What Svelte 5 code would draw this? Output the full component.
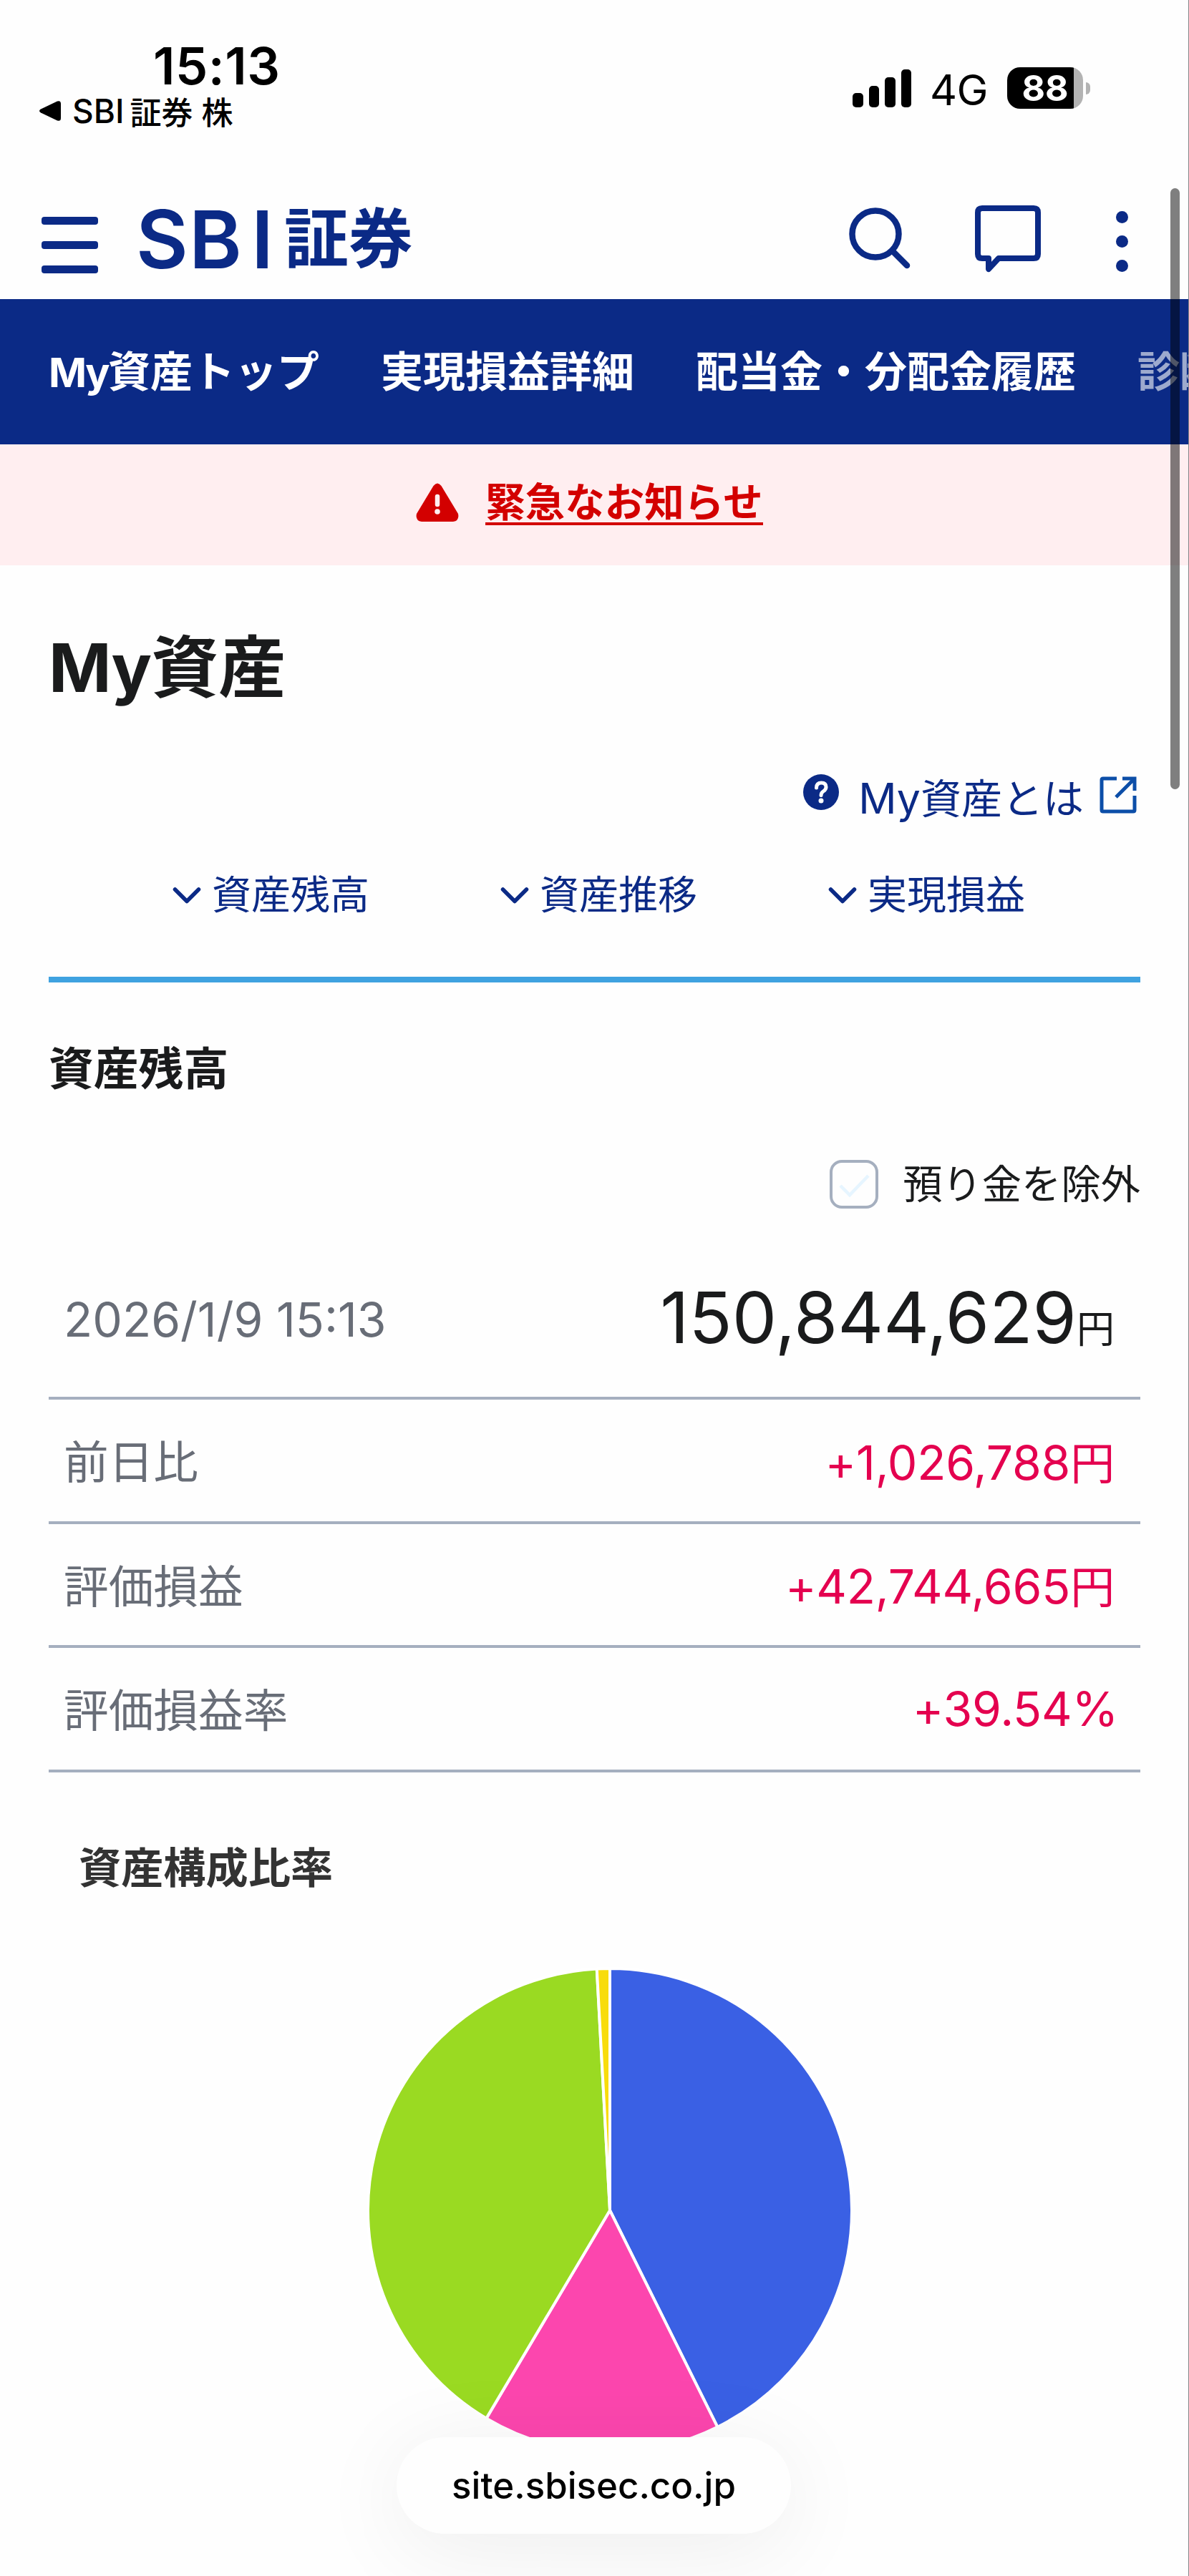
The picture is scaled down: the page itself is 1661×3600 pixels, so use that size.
<script>
    let exclude_deposit = $state(false);

    const signal = [20, 30, 42, 53];
    const menu = ["実現損益詳細", "配当金・分配金履歴"];
    const anchors = ["資産残高", "資産推移", "実現損益"];
    const rows = [
        { label: "前日比", value: "+1,026,788", unit: "円" },
        { label: "評価損益", value: "+42,744,665", unit: "円" },
        { label: "評価損益率", value: "+39.54%", unit: "" }
    ];

    // angles in degrees, clockwise from the top
    const slices = [
        { from: 0, to: 153.6, color: "#3a60e4" },
        { from: 153.6, to: 210.7, color: "#fc46ae" },
        { from: 210.7, to: 356.9, color: "#9ada22" },
        { from: 356.9, to: 360, color: "#f8dc0c" }
    ];
    const radius = 338;

    function point(angle) {
        const rad = (angle * Math.PI) / 180;
        return `${(340 + radius * Math.sin(rad)).toFixed(2)} ${(340 - radius * Math.cos(rad)).toFixed(2)}`;
    }
    function slice_path(s) {
        const large = s.to - s.from > 180 ? 1 : 0;
        return `M340 340 L${point(s.from)} A${radius} ${radius} 0 ${large} 1 ${point(s.to)} Z`;
    }
</script>

<div class="screen">
    <div class="status">
        <div class="status-left">
            <div class="clock">15:13</div>
            <div class="back">
                <svg width="32" height="30" viewBox="0 0 32 30"><path d="M3 12.5 L26 1.5 Q31 0 31 5 V25 Q31 30 26 28.500 L3 17.500 Q-1 15 3 12.500Z" fill="#000" /></svg>
                <span class="back-sbi">SBI</span><span class="back-jp">証券</span><span class="back-jp last">株</span>
            </div>
        </div>
        <div class="status-right">
            <div class="signal">
                {#each signal as height}
                    <i style="height: {height}px"></i>
                {/each}
            </div>
            <span class="network">4G</span>
            <div class="battery"><span>88</span></div>
            <i class="nub"></i>
        </div>
    </div>

    <header>
        <div class="burger"><i></i><i></i><i></i></div>
        <div class="logo"><span class="logo-s">S</span><span class="logo-b">B</span><span class="logo-i">I</span><span class="logo-jp">証券</span></div>
        <div class="tools">
            <svg width="88" height="100" viewBox="0 0 88 100" fill="none" stroke="#0b2a86" stroke-width="8.500" stroke-linecap="round">
                <circle cx="38" cy="45" r="32.500" />
                <path d="M62 69 L82 89" />
            </svg>
            <svg width="92" height="100" viewBox="0 0 92 100" fill="none" stroke="#0b2a86" stroke-width="8" stroke-linejoin="round">
                <path d="M10 9 H82 Q88 9 88 15 V73 Q88 79 82 79 H33 L19 94 V79 H10 Q4 79 4 73 V15 Q4 9 10 9Z" />
            </svg>
            <div class="dots"><i></i><i></i><i></i></div>
        </div>
    </header>

    <nav>
        <a href="#top"><span class="nav-my">My</span>資産トップ</a>
        {#each menu as item}
            <a href="#menu">{item}</a>
        {/each}
        <a href="#menu" class="faded">診断</a>
    </nav>

    <div class="notice">
        <svg width="60" height="54" viewBox="0 0 60 54">
            <path d="M24.500 4 Q30 -3 35.500 4 L59 43 Q61 53 52 54 H8 Q-1 53 1 43Z" fill="#d30000" />
            <path d="M30 19 V30" stroke="#ffeef0" stroke-width="6.500" stroke-linecap="round" />
            <circle cx="30" cy="40" r="3.800" fill="#ffeef0" />
        </svg>
        <a href="#notice">緊急なお知らせ</a>
    </div>

    <main>
        <h1><span>My</span>資産</h1>

        <div class="help">
            <svg class="question" width="50" height="50" viewBox="0 0 50 50">
                <circle cx="25" cy="25" r="25" fill="#0b2a86" />
                <path d="M18.500 19 Q18.500 12 25.500 12 Q32 12 32 18 Q32 21.500 28 24 Q25 26 25 29.500" fill="none" stroke="#fff" stroke-width="5" stroke-linecap="round" />
                <circle cx="25" cy="37" r="3.500" fill="#fff" />
            </svg>
            <a href="#help"><span>My</span>資産とは</a>
            <svg class="external" width="52" height="52" viewBox="0 0 52 52" fill="none" stroke="#0c4ea8" stroke-width="5">
                <path d="M24 3 H5 Q3 3 3 5 V47 Q3 49 5 49 H47 Q49 49 49 47 V27" />
                <path d="M32 3 H49 V20 M49 3 L23 29" />
            </svg>
        </div>

        <div class="anchors">
            {#each anchors as anchor}
                <a href="#section">
                    <svg width="40" height="26" viewBox="0 0 40 26"><path d="M3.500 4 L20 20.500 L36.500 4" fill="none" stroke="#0b2a86" stroke-width="5.500" stroke-linecap="round" stroke-linejoin="round" /></svg>
                    {anchor}
                </a>
            {/each}
        </div>

        <h2>資産残高</h2>

        <label class="exclude">
            <input type="checkbox" bind:checked={exclude_deposit} />
            <span class="box">
                <svg width="50" height="50" viewBox="0 0 50 50"><path d="M6 28 L19 41 L45 14" fill="none" stroke={exclude_deposit ? "#0b2a86" : "#e6f5ff"} stroke-width="4.500" /></svg>
            </span>
            <span class="exclude-text">預り金を除外</span>
        </label>

        <div class="row total">
            <span class="label date">2026/1/9 15:13</span>
            <span class="amount">150,844,629<small>円</small></span>
        </div>
        {#each rows as row}
            <div class="row">
                <span class="label">{row.label}</span>
                <span class="value" class:percent={!row.unit}>{row.value}<span class="unit">{row.unit}</span></span>
            </div>
        {/each}

        <h3>資産構成比率</h3>
        <svg class="pie" width="680" height="680" viewBox="0 0 680 680">
            {#each slices as s}
                <path d={slice_path(s)} fill={s.color} stroke="#fff" stroke-width="4" stroke-linejoin="round" />
            {/each}
        </svg>
    </main>

    <div class="address">site.sbisec.co.jp</div>
    <div class="scrollbar"></div>
</div>

<style>
:global(body) {
    background: #fff;
}
.screen {
    position: relative;
    box-sizing: border-box;
    width: 1661px;
    height: 3600px;
    overflow: hidden;
    background: #fefefe;
    color: #1a1b1c;
    font-family: Inter, "Noto Sans CJK JP", sans-serif;
}
.screen::after {
    content: "";
    position: absolute;
    top: 0;
    right: 0;
    width: 1px;
    height: 100%;
    background: #85868a;
}
a {
    color: inherit;
    text-decoration: none;
    white-space: nowrap;
}
i {
    display: block;
}
svg {
    display: block;
    flex: none;
}

.status {
    display: flex;
    justify-content: space-between;
    height: 258px;
    color: #000;
}
.status-left {
    padding: 52px 0 0 54px;
}
.clock {
    padding-left: 160px;
    font-size: 72px;
    font-weight: 600;
    line-height: 80px;
    letter-spacing: 0.500px;
}
.back {
    display: flex;
    align-items: center;
    height: 46px;
    font-size: 44px;
}
.back-sbi {
    margin-left: 15px;
    font-size: 46px;
    font-weight: 500;
}
.back-jp {
    margin-left: 8px;
    font-size: 44px;
    font-weight: 500;
}
.back-jp.last {
    margin-left: 12px;
}
.status-right {
    display: flex;
    align-items: center;
    height: 60px;
    padding: 93px 138px 0 0;
}
.signal {
    display: flex;
    align-items: flex-end;
    gap: 8px;
    height: 54px;
}
.signal i {
    width: 14.500px;
    border-radius: 5px;
    background: #000;
}
.network {
    width: 108px;
    padding: 4px 0 0 26px;
    font-size: 59px;
    letter-spacing: -0.500px;
}
.battery {
    width: 106px;
    height: 58px;
    border-radius: 18px;
    background: linear-gradient(to right, #000 93px, #b3b3b3 93px);
    color: #fff;
    font-size: 50px;
    font-weight: 700;
    line-height: 59px;
    text-align: center;
}
.nub {
    width: 6px;
    height: 17px;
    margin-left: 4px;
    border-radius: 0 8px 8px 0;
    background: #b3b3b3;
}

header {
    display: flex;
    height: 160px;
    color: #0b2a86;
}
.burger {
    width: 79px;
    padding: 45px 0 0 58px;
}
.burger i {
    height: 11px;
    margin-bottom: 23px;
    border-radius: 4px;
    background: #0b2a86;
}
.logo {
    display: flex;
    margin-left: 53px;
    height: 152px;
    font-size: 112px;
    font-weight: 600;
    line-height: 152px;
}
.logo-s {
    width: 74px;
}
.logo-b {
    width: 87px;
}
.logo-i {
    width: 46px;
}
.logo-jp {
    font-size: 90px;
    font-weight: 700;
}
.tools {
    display: flex;
    align-items: flex-start;
    margin-left: auto;
    padding: 24px 85px 0 0;
}
.tools svg + svg {
    margin-left: 89px;
}
.dots {
    display: grid;
    gap: 17px;
    margin: 13px 0 0 105px;
}
.dots i {
    width: 17px;
    height: 17px;
    border-radius: 50%;
    background: #0b2a86;
}

nav {
    display: flex;
    gap: 86px;
    height: 203px;
    padding-left: 68px;
    background: #0b2a86;
    color: #fff;
    font-size: 59px;
    font-weight: 700;
    line-height: 203px;
}
.nav-my {
    font-size: 57px;
    letter-spacing: -2.500px;
}
.faded {
    opacity: 0.6;
}

.notice {
    display: flex;
    align-items: center;
    justify-content: center;
    gap: 37px;
    height: 169px;
    padding: 0 14px 3px 0;
    box-sizing: border-box;
    background: #ffeef0;
    color: #d30000;
    font-size: 55.500px;
    font-weight: 700;
}
.notice svg {
    margin-bottom: 4px;
}
.notice a {
    line-height: 56px;
    border-bottom: 4px solid #d30000;
}

main {
    padding: 0 68px;
}
h1,
h2,
h3 {
    margin: 0;
    font-weight: 700;
}
h1 {
    padding-top: 78px;
    font-size: 94px;
    line-height: 130px;
}
h1 span {
    letter-spacing: -1px;
}
.help {
    display: flex;
    align-items: center;
    justify-content: flex-end;
    height: 80px;
    margin-top: 76px;
    padding-right: 5px;
    color: #0b2a86;
    font-size: 57px;
}
.help a {
    margin: 0 22px 5px 27px;
}
.help a span {
    font-size: 59px;
}
.question {
    margin-bottom: 14px;
}
.external {
    margin-bottom: 6px;
}
.anchors {
    display: flex;
    align-items: flex-start;
    gap: 183px;
    height: 155px;
    padding: 56px 0 0 173px;
    border-bottom: 8px solid #3fa2e0;
    color: #0b2a86;
    font-size: 55px;
    line-height: 80px;
}
.anchors a {
    display: flex;
    align-items: center;
    gap: 15px;
}
.anchors svg {
    margin-top: 4px;
}
h2 {
    padding-top: 80px;
    font-size: 62.800px;
    line-height: 80px;
}
.exclude {
    display: flex;
    align-items: center;
    justify-content: flex-end;
    height: 68px;
    margin-top: 88px;
    font-size: 55.300px;
}
.exclude-text {
    padding-bottom: 9px;
}
.exclude input {
    position: absolute;
    opacity: 0;
}
.box {
    box-sizing: border-box;
    width: 68px;
    height: 68px;
    margin-right: 34px;
    padding: 4px 5px;
    border: 4px solid #a5afbf;
    border-radius: 17px;
}

.row {
    display: flex;
    align-items: center;
    justify-content: space-between;
    box-sizing: border-box;
    height: 173.500px;
    padding: 0 36px 0 21px;
    border-bottom: 4px solid #a5afbf;
}
.total {
    height: 267px;
    padding-top: 41px;
}
.label {
    padding-bottom: 4px;
    color: #686d77;
    font-size: 62.700px;
}
.date {
    padding: 5px 0 0;
    font-size: 66px;
}
.amount {
    font-size: 99px;
}
.amount small {
    font-size: 53px;
}
.value {
    color: #e4004f;
    font-size: 66px;
    letter-spacing: -0.200px;
}
.percent {
    margin-right: -5px;
}
.unit {
    font-size: 62px;
}

h3 {
    padding: 94px 0 0 42px;
    color: #333;
    font-size: 59.200px;
    line-height: 80px;
}
.pie {
    margin: 98px 0 0 444px;
}

.address {
    position: absolute;
    top: 3406px;
    left: 554px;
    width: 551px;
    height: 135px;
    border-radius: 68px;
    background: #fefefe;
    box-shadow: 0 20px 130px rgba(0, 0, 0, 0.07);
    color: #000;
    font-size: 51px;
    font-weight: 500;
    line-height: 135px;
    text-align: center;
}
.scrollbar {
    position: absolute;
    top: 263px;
    left: 1635px;
    width: 13px;
    height: 840px;
    border-radius: 7px;
    background: rgba(0, 0, 0, 0.5);
}
</style>
